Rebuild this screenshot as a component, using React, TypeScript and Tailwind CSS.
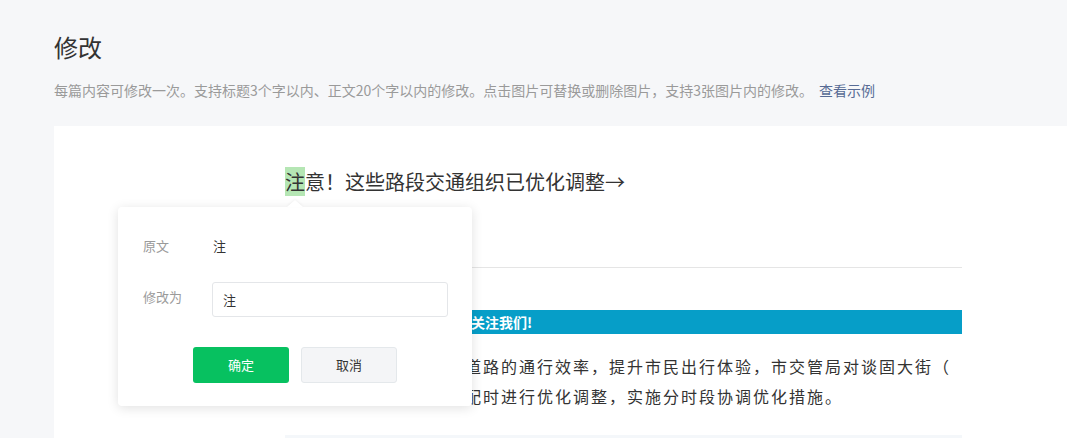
export default function App() {
  return (
    <div
      className="min-h-screen w-full overflow-hidden bg-[#f6f7f9] pl-[54px] text-[#333]"
      style={{ fontFamily: '"Noto Sans CJK SC", "Noto Sans", sans-serif' }}
    >
      <h1 className="pt-[31px] text-[24px] leading-[32px] font-normal text-[#333]">修改</h1>
      <p className="mt-[17px] text-[14px] leading-[20px] text-[#9a9a9a]">
        每篇内容可修改一次。支持标题3个字以内、正文20个字以内的修改。点击图片可替换或删除图片，支持3张图片内的修改。
        <a className="ml-[6px] text-[#576b95]">查看示例</a>
      </p>

      <section className="relative mt-[26px] h-[330px] bg-white pt-[40px] pl-[231px]">
        <div className="w-[677px]">
          <h2 className="text-[20px] leading-[32px] font-normal text-[#333]">
            <span className="bg-[#b5e6b4]">注</span>意！这些路段交通组织已优化调整→
          </h2>

          <div className="mt-[69px] h-px bg-[#e5e5e5]" />

          <div className="mt-[42px] flex h-[24px] items-center bg-[#069ec8] pl-[102px] text-[14px] font-bold text-white">
            点击上方蓝字关注我们!
          </div>

          <div className="mt-[17px] text-[16px] leading-[30px] tracking-[2px] whitespace-nowrap text-[#333]">
            <div>为进一步提高城区主干道路的通行效率，提升市民出行体验，市交管局对谈固大街（</div>
            <div>建华大街）路口信号灯配时进行优化调整，实施分时段协调优化措施。</div>
          </div>

          <div className="mt-[24px] h-[3px] bg-[#f4f7fa]" />
        </div>

        <div className="absolute top-[81px] left-[64px] w-[354px] rounded-[4px] bg-white px-[24px] pt-[29px] pb-[23px] shadow-[0_2px_12px_rgba(0,0,0,0.12)]">
          <div className="absolute -top-[7px] left-1/2 h-0 w-0 -translate-x-1/2 border-x-[8px] border-b-[7px] border-x-transparent border-b-white drop-shadow-[0_-1px_1px_rgba(0,0,0,0.05)]" />
          <div className="flex pl-px text-[13px] leading-[20px]">
            <span className="w-[70px] text-[#9a9a9a]">原文</span>
            <span className="text-[#333]">注</span>
          </div>
          <div className="mt-[26px] flex pl-px text-[13px]">
            <span className="w-[69px] pt-[5px] leading-[20px] text-[#9a9a9a]">修改为</span>
            <div className="flex h-[35px] flex-1 items-center rounded-[3px] border border-[#e4e6e9] px-[10px] text-[#333]">
              注
            </div>
          </div>
          <div className="mt-[30px] flex justify-center gap-[12px] text-[13px]">
            <button className="h-[36px] w-[96px] rounded-[3px] bg-[#07c160] text-white">确定</button>
            <button className="h-[36px] w-[96px] rounded-[3px] border border-[#e4e8eb] bg-[#f4f5f7] text-[#333]">
              取消
            </button>
          </div>
        </div>
      </section>
    </div>
  );
}
